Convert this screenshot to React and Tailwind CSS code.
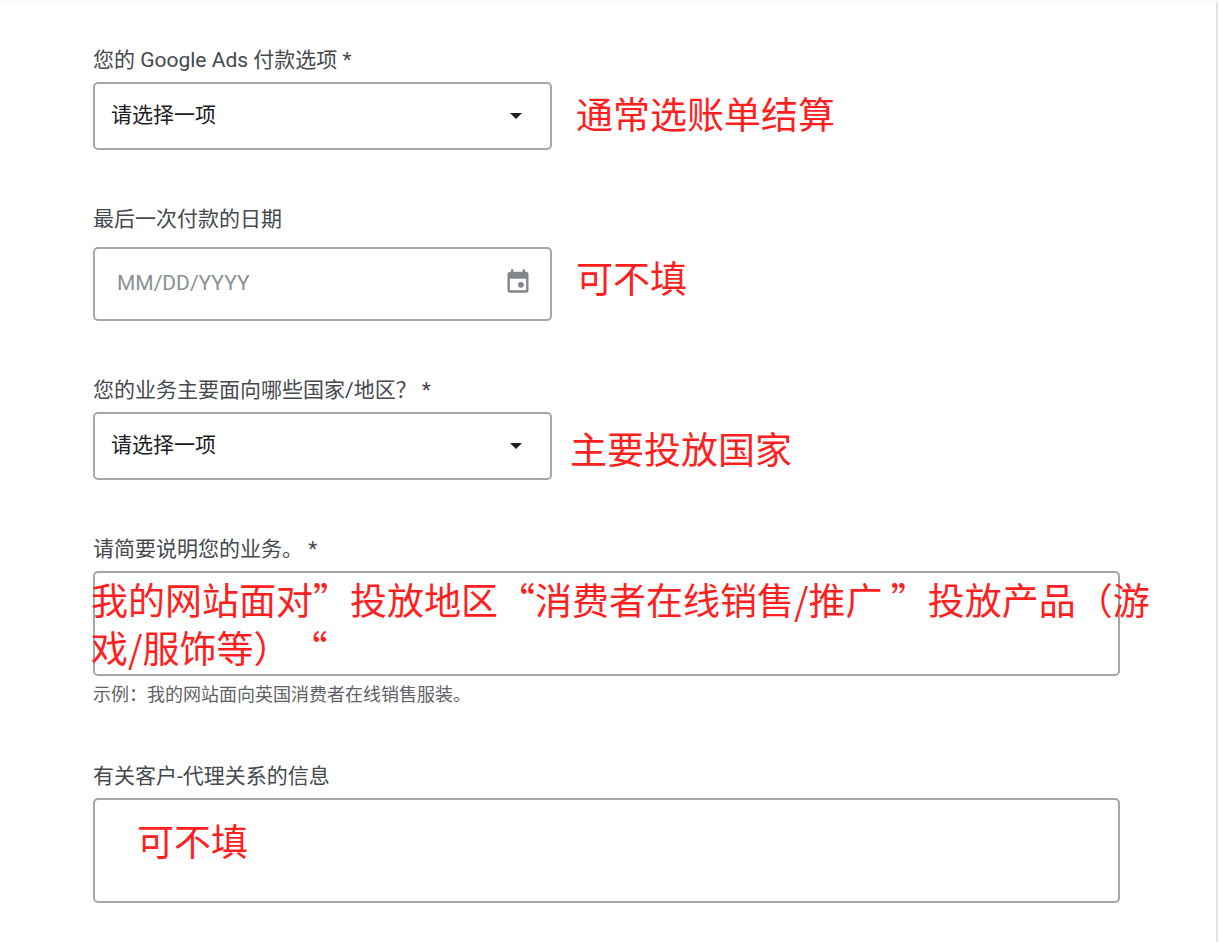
import React from 'react';

const Field = ({ id, label, labelClass = 'mb-2', children }) => (
  <div>
    <label htmlFor={id} className={`block text-[21px] leading-7 text-[#45494e] ${labelClass}`}>
      {label}
    </label>
    {children}
  </div>
);

const Note = ({ className = '', children }) => (
  <p
    className={`font-['Noto_Sans_CJK_SC',sans-serif] text-[37px] leading-12 text-[#ff1f1f] [text-spacing-trim:space-all] ${className}`}
  >
    {children}
  </p>
);

const SelectBox = ({ id }) => (
  <div className="relative w-[459px]">
    <select
      id={id}
      className="block h-[68px] w-full appearance-none rounded-[5px] border-2 border-[#a2a7ab] bg-white pl-4 pr-14 text-[21px] text-[#202124]"
    >
      <option>请选择一项</option>
    </select>
    <svg
      viewBox="0 0 12 6"
      className="pointer-events-none absolute right-[30px] top-[31px] h-1.5 w-3 fill-[#202124]"
      aria-hidden="true"
    >
      <path d="M0 0h12L6 6z" />
    </svg>
  </div>
);

const DateBox = ({ id }) => (
  <div className="relative w-[459px]">
    <input
      id={id}
      type="text"
      placeholder="MM/DD/YYYY"
      className="block h-[74px] w-full rounded-[5px] border-2 border-[#a2a7ab] bg-white pb-0.5 pl-[22px] pr-16 text-[21px] text-[#202124] placeholder:text-[#8b9095]"
    />
    <button type="button" aria-label="选择日期" className="absolute right-5 top-5 text-[#80868b]">
      <svg viewBox="0 0 24 24" className="size-7" fill="currentColor" aria-hidden="true">
        <path d="M19 4h-1V2h-2v2H8V2H6v2H5c-1.1 0-2 .9-2 2v14c0 1.1.9 2 2 2h14c1.1 0 2-.9 2-2V6c0-1.1-.9-2-2-2zm0 16H5V10h14v10z" />
        <circle cx="14.5" cy="15.3" r="2.5" />
      </svg>
    </button>
  </div>
);

const TextBox = ({ id }) => (
  <textarea
    id={id}
    className="block h-[105px] w-full resize-none rounded-[5px] border-2 border-[#a2a7ab] bg-white p-4 text-[21px] text-[#202124]"
  />
);

const App = () => {
  return (
    <div className="min-h-screen border-t-[3px] border-[#f8f9ff] bg-white pr-0.5 font-[Roboto,'Noto_Sans_CJK_SC',sans-serif]">
      <form className="flex min-h-[calc(100vh-3px)] flex-col gap-[55px] border-r-2 border-[#e0e0e6] pb-9 pl-[93px] pr-24 pt-[43px]">
        <Field id="payment" label="您的 Google Ads 付款选项 *">
          <div className="flex items-center gap-6">
            <SelectBox id="payment" />
            <Note className="pb-1.5">通常选账单结算</Note>
          </div>
        </Field>

        <Field id="last-date" label="最后一次付款的日期" labelClass="mb-3.5">
          <div className="flex items-center gap-6">
            <DateBox id="last-date" />
            <Note className="pb-3.5">可不填</Note>
          </div>
        </Field>

        <Field id="region" label="您的业务主要面向哪些国家/地区？ *">
          <div className="flex items-center gap-[18px]">
            <SelectBox id="region" />
            <Note className="pt-1">主要投放国家</Note>
          </div>
        </Field>

        <Field id="business" label="请简要说明您的业务。 *">
          <div className="relative">
            <TextBox id="business" />
            {/* runs past both edges of the box */}
            <Note className="pointer-events-none absolute -right-8 -left-0.5 top-1">
              我的网站面对”投放地区“消费者在线销售/推广 ”投放产品（游
              <br />
              戏/服饰等）“
            </Note>
          </div>
          <p className="mt-[7px] text-lg leading-6 text-[#5f6368]">
            示例：我的网站面向英国消费者在线销售服装。
          </p>
        </Field>

        <Field id="agency" label="有关客户-代理关系的信息">
          <div className="relative">
            <TextBox id="agency" />
            <Note className="pointer-events-none absolute left-11 top-[18px]">可不填</Note>
          </div>
        </Field>
      </form>
    </div>
  );
};

export default App;
